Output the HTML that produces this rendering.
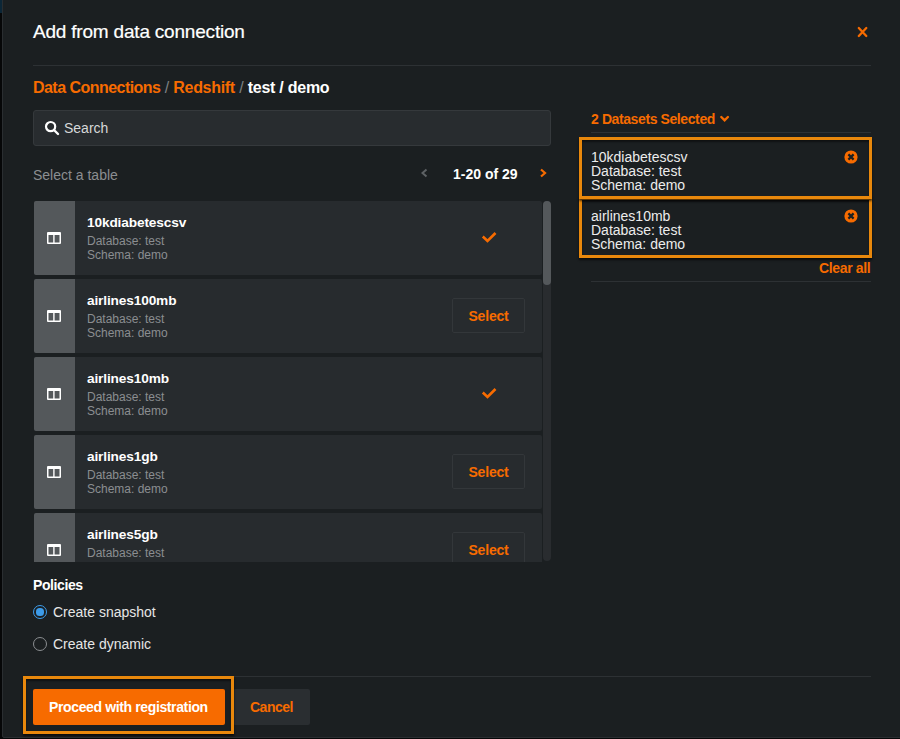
<!DOCTYPE html>
<html><head><meta charset="utf-8">
<style>
*{box-sizing:border-box;margin:0;padding:0}
html,body{width:900px;height:739px;overflow:hidden;background:#060708;font-family:"Liberation Sans",sans-serif}
.abs{position:absolute}
#modal{position:absolute;left:2px;top:-4px;width:905px;height:742px;background:#1b1f21;border-radius:2px;border:1px solid #2a2e31}
.t{position:absolute;white-space:nowrap;line-height:1}
.or{color:#f76b00}
.sep{position:absolute;height:1px;background:#2d3134}
.card{position:absolute;left:1px;width:508px;height:74px;background:#272b2e;border-radius:2px;overflow:hidden}
.card .ic{position:absolute;left:0;top:0;width:41px;height:74px;background:#54585b}
.card .ic svg{position:absolute;left:13px;top:31px}
.card .nm{position:absolute;left:53px;top:13.5px;font-weight:bold;font-size:13.7px;letter-spacing:-0.15px;color:#fff;white-space:nowrap;line-height:16px}
.card .d1{position:absolute;left:53px;top:33px;font-size:12px;color:#8b8e91;white-space:nowrap;line-height:14px}
.card .d2{position:absolute;left:53px;top:47px;font-size:12px;color:#8b8e91;white-space:nowrap;line-height:14px}
.sel{position:absolute;left:418px;top:19px;width:73px;height:35px;border:1px solid #33373a;border-radius:2px;color:#f76b00;font-weight:bold;font-size:14px;letter-spacing:-0.2px;text-align:center;line-height:35px}
.chk{position:absolute;left:447px;top:30px}
.hl{position:absolute;border:3px solid #e9880c;background:#1b1f21;box-shadow:0 2px 2px rgba(0,0,0,.65), inset 0 2px 2px rgba(0,0,0,.45)}
.ds{position:absolute;left:9px;font-size:14px;color:#ececec;white-space:nowrap;line-height:14px}
.xc{position:absolute;left:262px}
</style></head><body>
<div id="modal"></div>
<div class="abs" style="left:0;top:0;width:2px;height:13px;background:#0b2637"></div>

<div class="t" style="left:33px;top:22px;font-size:19px;letter-spacing:-0.2px;-webkit-text-stroke:0.2px #fff;color:#fff">Add from data connection</div>
<svg class="abs" style="left:850px;top:20px" width="25" height="25"><path d="M8.8 8 L16.3 16 M16.3 8 L8.8 16" stroke="#f76b00" stroke-width="2.3" stroke-linecap="round"/></svg>
<div class="sep" style="left:33px;top:65px;width:838px"></div>

<div class="t" style="left:33px;top:80px;font-size:16px;letter-spacing:-0.3px;word-spacing:0.2px;font-weight:bold;color:#fff"><span class="or" style="letter-spacing:-0.55px">Data Connections</span> <span style="color:#7d8184;font-weight:normal">/</span> <span class="or">Redshift</span> <span style="color:#7d8184;font-weight:normal">/</span> test / demo</div>

<div class="abs" style="left:33px;top:110px;width:518px;height:36px;background:#282c2f;border:1px solid #35393c;border-radius:3px"></div>
<svg class="abs" style="left:43px;top:119px" width="20" height="20"><circle cx="7.6" cy="7.6" r="4.6" fill="none" stroke="#fff" stroke-width="2.2"/><path d="M11 11 L15 15" stroke="#fff" stroke-width="2.4" stroke-linecap="round"/></svg>
<div class="t" style="left:64px;top:121px;font-size:14px;color:#d6d8d9">Search</div>

<div class="t" style="left:33px;top:168px;font-size:14px;color:#8b8e91">Select a table</div>
<svg class="abs" style="left:418px;top:166px" width="14" height="14"><path d="M8.5 3.5 L4.5 7 L8.5 10.5" fill="none" stroke="#5d6164" stroke-width="2"/></svg>
<div class="t" style="left:453px;top:167px;font-size:14px;color:#fff;font-weight:bold">1-20 of 29</div>
<svg class="abs" style="left:536px;top:166px" width="14" height="14"><path d="M5 3.5 L9 7 L5 10.5" fill="none" stroke="#f76b00" stroke-width="2.2"/></svg>

<div class="abs" style="left:33px;top:201px;width:518px;height:361px;overflow:hidden">
  <div class="card" style="top:0"><div class="ic"><svg width="14" height="13"><path fill="#fff" fill-rule="evenodd" d="M1 0 H13 Q14 0 14 1 V11 Q14 12 13 12 H1 Q0 12 0 11 V1 Q0 0 1 0 Z M1.5 3 V10.5 H6.2 V3 Z M7.6 3 V10.5 H12.5 V3 Z"/></svg></div><div class="nm">10kdiabetescsv</div><div class="d1">Database: test</div><div class="d2">Schema: demo</div><svg class="chk" width="18" height="14"><path d="M1.8 5.5 L6.5 10 L14.5 2" fill="none" stroke="#f76b00" stroke-width="2.6"/></svg></div>
  <div class="card" style="top:78px"><div class="ic"><svg width="14" height="13"><path fill="#fff" fill-rule="evenodd" d="M1 0 H13 Q14 0 14 1 V11 Q14 12 13 12 H1 Q0 12 0 11 V1 Q0 0 1 0 Z M1.5 3 V10.5 H6.2 V3 Z M7.6 3 V10.5 H12.5 V3 Z"/></svg></div><div class="nm">airlines100mb</div><div class="d1">Database: test</div><div class="d2">Schema: demo</div><div class="sel">Select</div></div>
  <div class="card" style="top:156px"><div class="ic"><svg width="14" height="13"><path fill="#fff" fill-rule="evenodd" d="M1 0 H13 Q14 0 14 1 V11 Q14 12 13 12 H1 Q0 12 0 11 V1 Q0 0 1 0 Z M1.5 3 V10.5 H6.2 V3 Z M7.6 3 V10.5 H12.5 V3 Z"/></svg></div><div class="nm">airlines10mb</div><div class="d1">Database: test</div><div class="d2">Schema: demo</div><svg class="chk" width="18" height="14"><path d="M1.8 5.5 L6.5 10 L14.5 2" fill="none" stroke="#f76b00" stroke-width="2.6"/></svg></div>
  <div class="card" style="top:234px"><div class="ic"><svg width="14" height="13"><path fill="#fff" fill-rule="evenodd" d="M1 0 H13 Q14 0 14 1 V11 Q14 12 13 12 H1 Q0 12 0 11 V1 Q0 0 1 0 Z M1.5 3 V10.5 H6.2 V3 Z M7.6 3 V10.5 H12.5 V3 Z"/></svg></div><div class="nm">airlines1gb</div><div class="d1">Database: test</div><div class="d2">Schema: demo</div><div class="sel">Select</div></div>
  <div class="card" style="top:312px"><div class="ic"><svg width="14" height="13"><path fill="#fff" fill-rule="evenodd" d="M1 0 H13 Q14 0 14 1 V11 Q14 12 13 12 H1 Q0 12 0 11 V1 Q0 0 1 0 Z M1.5 3 V10.5 H6.2 V3 Z M7.6 3 V10.5 H12.5 V3 Z"/></svg></div><div class="nm">airlines5gb</div><div class="d1">Database: test</div><div class="d2">Schema: demo</div><div class="sel">Select</div></div>
  <div class="abs" style="left:510px;top:0;width:8px;height:360px;background:#292c2f;border-radius:4px"></div>
  <div class="abs" style="left:510px;top:0;width:8px;height:84px;background:#54585b;border-radius:4px"></div>
</div>

<div class="t or" style="left:591px;top:112px;font-size:14px;letter-spacing:-0.4px;font-weight:bold">2 Datasets Selected</div>
<svg class="abs" style="left:718px;top:112px" width="14" height="14"><path d="M3.3 5 L6.6 8.3 L9.9 5" fill="none" stroke="#f76b00" stroke-width="2.4" stroke-linecap="round"/></svg>
<div class="sep" style="left:591px;top:132px;width:280px"></div>

<div class="hl" style="left:579px;top:197px;width:293px;height:61px">
  <div class="ds" style="top:9px">airlines10mb</div>
  <div class="ds" style="top:23px">Database: test</div>
  <div class="ds" style="top:37px">Schema: demo</div>
  <svg class="xc" style="top:8.5px" width="14" height="14"><circle cx="7" cy="7" r="6.6" fill="#f76b00"/><path d="M4.4 4.4 L9.6 9.6 M9.6 4.4 L4.4 9.6" stroke="#1b1f21" stroke-width="2.2"/></svg>
</div>
<div class="hl" style="left:579px;top:137px;width:293px;height:62px">
  <div class="ds" style="top:10px">10kdiabetescsv</div>
  <div class="ds" style="top:24px">Database: test</div>
  <div class="ds" style="top:38px">Schema: demo</div>
  <svg class="xc" style="top:9.5px" width="14" height="14"><circle cx="7" cy="7" r="6.6" fill="#f76b00"/><path d="M4.4 4.4 L9.6 9.6 M9.6 4.4 L4.4 9.6" stroke="#1b1f21" stroke-width="2.2"/></svg>
</div>
<div class="t or" style="left:819px;top:261px;font-size:14px;letter-spacing:-0.35px;font-weight:bold">Clear all</div>
<div class="sep" style="left:591px;top:281px;width:280px"></div>

<div class="t" style="left:33px;top:578px;font-size:14px;letter-spacing:-0.4px;font-weight:bold;color:#fff">Policies</div>
<div class="abs" style="left:33px;top:605px;width:14px;height:14px;border-radius:50%;border:1.3px solid #3d9be9"></div>
<div class="abs" style="left:36.4px;top:608.4px;width:7.2px;height:7.2px;border-radius:50%;background:#3d9be9"></div>
<div class="t" style="left:53px;top:605px;font-size:14px;color:#e6e6e6">Create snapshot</div>
<div class="abs" style="left:33px;top:637px;width:14px;height:14px;border-radius:50%;border:1px solid #8b8e91"></div>
<div class="t" style="left:53px;top:637px;font-size:14px;color:#e6e6e6">Create dynamic</div>

<div class="sep" style="left:33px;top:676px;width:838px"></div>
<div class="abs" style="left:233px;top:689px;width:77px;height:36px;background:#2a2e31;border-radius:2px"></div>
<div class="t or" style="left:250px;top:700px;font-size:14px;letter-spacing:-0.5px;font-weight:bold">Cancel</div>
<div class="hl" style="left:23px;top:676px;width:211px;height:58px"></div>
<div class="abs" style="left:33px;top:689px;width:192px;height:36px;background:#f76b00;border-radius:2px"></div>
<div class="t" style="left:49px;top:700px;font-size:14px;letter-spacing:-0.37px;font-weight:bold;color:#fff">Proceed with registration</div>

</body></html>
